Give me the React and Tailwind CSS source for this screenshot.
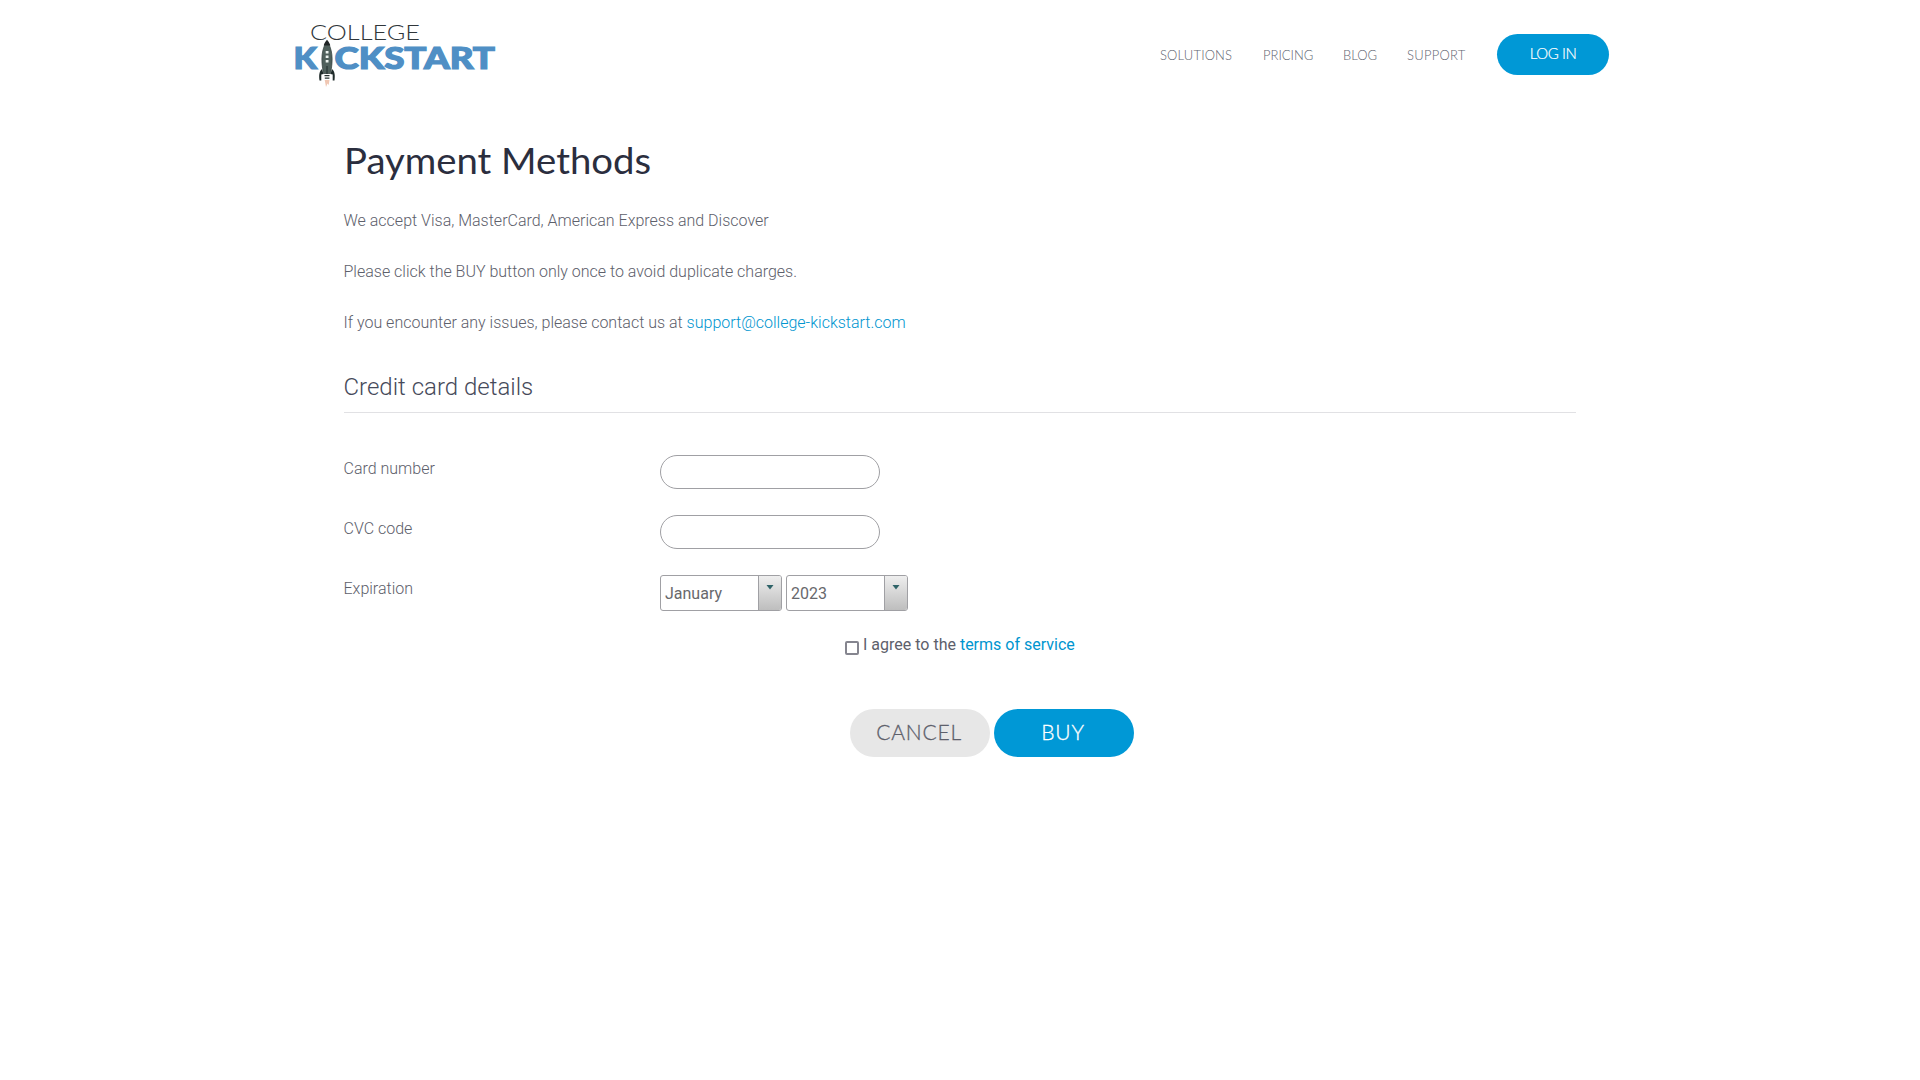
const Logo = () => (
  <svg width="210" height="76" viewBox="290 16 210 76" className="block" role="img" aria-label="College Kickstart">
    <g fontFamily="Lato, sans-serif">
      <text x="310" y="40.300" fontSize="22" fontWeight="300" fill="#30363a" textLength="110" lengthAdjust="spacingAndGlyphs">COLLEGE</text>
    </g>
    <g fontFamily="Lato, sans-serif" fontWeight="900" fill="#4f8fc5" stroke="#4f8fc5" strokeWidth="1.200" fontSize="30">
      <text x="293.500" y="68.500" textLength="23.500" lengthAdjust="spacingAndGlyphs">K</text>
      <text x="334.500" y="68.500" textLength="160.500" lengthAdjust="spacingAndGlyphs">CKSTART</text>
    </g>
    <path d="M327 39.500c-5.500 8-7.500 20-4.500 34h9c3-14 1-26-4.500-34z" fill="#fff" stroke="#fff" strokeWidth="2.400" />
    <path d="M322 69c-2.800 2.500-3.200 6-2.500 11.500h1.800v-6l2.200-.5zM332 69c2.800 2.500 3.200 6 2.500 11.500h-1.800v-6l-2.200-.5z" fill="#1f2b2a" />
    <path d="M327 41c-5.200 7.500-6.600 18-3.500 32.500h7c3.100-14.500 1.700-25-3.500-32.500z" fill="#50605c" stroke="#2f3b39" strokeWidth="0.700" />
    <path d="M327 39.800c-1.600 1.700-2.600 3.400-3.300 5.700h6.600c-.7-2.300-1.700-4-3.300-5.700z" fill="#202425" />
    <path d="M325.700 51h2.800v2.500h-2.800zM325.700 55.500h2.800v2.500h-2.800zM325.700 60h2.800v2.500h-2.800z" fill="#edf3f0" />
    <path d="M327 66v8" stroke="#1f2b2a" strokeWidth="1" />
    <path d="M324.500 75h5v1.200h-5zM324.800 77.500h4.600v1.200h-4.600z" fill="#25302f" />
    <path d="M324.700 80h4.800l-.8 5-1.200-1.500-1.500 3.500z" fill="#f0c7b3" />
  </svg>
);

const Row = ({ label, children }) => (
  <div className="flex h-[60px]">
    <div className="w-[316.500px] pt-[2px] leading-6">{label}</div>
    <div className="flex gap-1">{children}</div>
  </div>
);

const Select = ({ value }) => (
  <div className="flex h-9 w-[122px] overflow-hidden rounded-[3px] border border-[#a0a0a4]">
    <span className="flex-1 pl-1 pt-[6px] font-normal leading-6 text-[#68686c]">{value}</span>
    <span className="flex w-[23px] justify-center border-l border-[#a0a0a4] bg-gradient-to-b from-[#eeeeee] to-[#bebebe] pt-[9px]">
      <svg width="8" height="5" viewBox="0 0 8 5"><path d="M.5 0h7L4 4.500z" fill="#2f6368" /></svg>
    </span>
  </div>
);

export default function App() {
  return (
    <div className="h-screen overflow-hidden bg-white font-['Roboto',sans-serif] text-base font-light text-[#5d606b]">
      <header className="flex h-[92px] pl-[290px] pt-4">
        <Logo />
        <nav className="ml-[660px] mt-[29px] flex font-['Lato',sans-serif] text-[13px] leading-5 text-[#606470]">
          <a className="w-[103px] tracking-[0.15px]">SOLUTIONS</a>
          <a className="w-[80px]">PRICING</a>
          <a className="w-[64px]">BLOG</a>
          <a className="w-[90px] tracking-[0.25px]">SUPPORT</a>
        </nav>
        <button className="mt-[18px] h-[41px] w-[112px] rounded-full bg-[#0098d6] pb-0.5 font-['Lato',sans-serif] text-[15px] font-light tracking-[-0.4px] text-white [-webkit-text-stroke:0.2px_white]">LOG IN</button>
      </header>
      <main className="ml-[343.500px] w-[1232.500px]">
        <h1 className="origin-left scale-x-[1.064] pt-[44px] font-['Lato',sans-serif] text-[36px] font-normal leading-[48px] text-[#2b2e3e]">Payment Methods</h1>
        <div className="mt-[23px] flex flex-col gap-[27px] pt-[2px] leading-6">
          <p>We accept Visa, MasterCard, American Express and Discover</p>
          <p>Please click the BUY button only once to avoid duplicate charges.</p>
          <p>If you encounter any issues, please contact us at <a className="text-[#0095cf]">support@college-kickstart.com</a></p>
        </div>
        <h2 className="mt-[35px] h-[43px] border-b border-[#e1e1e4] pt-[1px] text-2xl font-light leading-8 text-[#464a5a]">Credit card details</h2>
        <div className="pt-[42px]">
          <Row label="Card number"><input className="h-[34px] w-[220px] rounded-full border border-[#a0a0a4]" /></Row>
          <Row label="CVC code"><input className="h-[34px] w-[220px] rounded-full border border-[#a0a0a4]" /></Row>
          <Row label="Expiration"><Select value="January" /><Select value="2023" /></Row>
        </div>
        <label className="-mt-0.5 ml-[501.500px] flex h-6 font-normal leading-6">
          <span className="mr-[4px] mt-[8px] block size-[14px] rounded-[2px] border-2 border-[#85858f]" />
          <span>I agree to the <a className="text-[#0095cf]">terms of service</a></span>
        </label>
        <div className="ml-[506.500px] mt-[52px] flex gap-1 font-['Lato',sans-serif] text-[21px]">
          <button className="h-12 w-[140px] rounded-full bg-[#e7e7e7] pb-0.5 pr-0.5 font-light tracking-[0.800px] text-[#5d606b] [-webkit-text-stroke:0.3px_#5d606b]">CANCEL</button>
          <button className="h-12 w-[140px] rounded-full bg-[#0098d6] pb-0.5 pr-0.5 font-light tracking-[0.800px] text-white [-webkit-text-stroke:0.3px_white]">BUY</button>
        </div>
      </main>
    </div>
  );
}
